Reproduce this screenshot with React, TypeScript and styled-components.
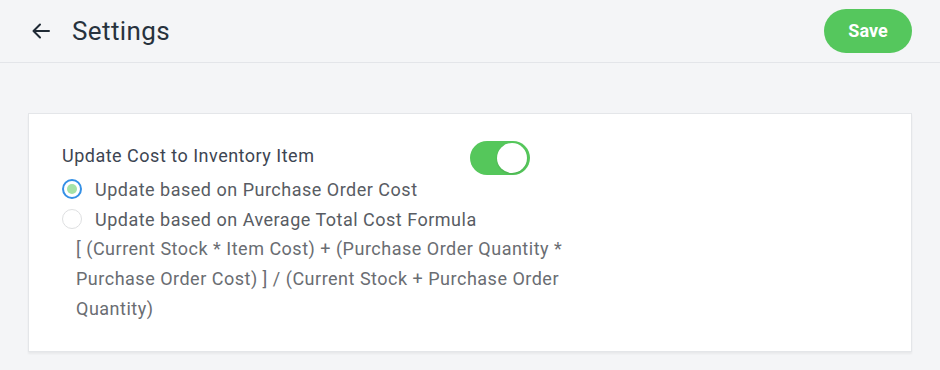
import React, { useState } from "react";
import styled, { createGlobalStyle } from "styled-components";

const GlobalStyle = createGlobalStyle`
  html, body { margin: 0; padding: 0; background: #f4f5f7; }
  body { font-family: Roboto, "Liberation Sans", Arial, sans-serif; }
  * { box-sizing: border-box; }
`;

const Page = styled.div`
  width: 940px;
  height: 370px;
  background: #f4f5f7;
  overflow: hidden;
`;

const Header = styled.header`
  height: 63px;
  display: flex;
  align-items: center;
  justify-content: space-between;
  padding: 0 28px 0 31px;
  border-bottom: 1px solid #e3e5e9;
`;

const TitleGroup = styled.div`
  display: flex;
  align-items: center;
  gap: 21px;
`;

const BackButton = styled.button`
  border: none;
  background: none;
  padding: 0;
  width: 20px;
  height: 20px;
  display: flex;
  align-items: center;
  justify-content: center;
  color: #1f2a35;
  cursor: pointer;
`;

const PageTitle = styled.h1`
  margin: 0;
  font-size: 26px;
  font-weight: 400;
  color: #27323d;
  letter-spacing: 0.4px;
`;

const SaveButton = styled.button`
  width: 88px;
  height: 44px;
  border: none;
  border-radius: 22px;
  background: #55c75d;
  color: #fff;
  font-family: Roboto, "Liberation Sans", Arial, sans-serif;
  font-size: 18px;
  font-weight: 700;
  cursor: pointer;
  margin-top: -1px;
`;

const Main = styled.main`
  padding: 50px 28px 0 28px;
`;

const Card = styled.section`
  height: 239px;
  background: #fff;
  border: 1px solid #e4e6e9;
  box-shadow: 0 2px 2px rgba(0, 0, 0, 0.05);
  padding: 27px 33px;
`;

const SettingHead = styled.div`
  display: flex;
  align-items: flex-start;
  height: 33px;
`;

const SettingTitle = styled.div`
  width: 408px;
  font-size: 18px;
  letter-spacing: 0.5px;
  line-height: 30px;
  color: #3d4552;
`;

const Toggle = styled.button<{ $on: boolean }>`
  position: relative;
  width: 60px;
  height: 34px;
  border-radius: 17px;
  border: none;
  padding: 0;
  background: ${(p) => (p.$on ? "#55c75b" : "#d6d9dd")};
  cursor: pointer;
`;

const Knob = styled.span<{ $on: boolean }>`
  position: absolute;
  top: 2px;
  left: ${(p) => (p.$on ? "27px" : "2px")};
  width: 30px;
  height: 30px;
  border-radius: 50%;
  background: #fff;
  box-shadow: 0 1px 2px rgba(0, 0, 0, 0.12);
`;

const RadioRow = styled.label`
  display: flex;
  align-items: center;
  gap: 13px;
  height: 30px;
  font-size: 18px;
  letter-spacing: 0.5px;
  color: #585c63;
  cursor: pointer;
`;

const RadioCircle = styled.span<{ $checked: boolean }>`
  width: 20px;
  height: 20px;
  border-radius: 50%;
  border: ${(p) => (p.$checked ? "2px solid #3490e6" : "1.5px solid #dedfe1")};
  display: flex;
  align-items: center;
  justify-content: center;
  flex-shrink: 0;
  &::after {
    content: "";
    display: ${(p) => (p.$checked ? "block" : "none")};
    width: 10px;
    height: 10px;
    border-radius: 50%;
    background: #a5e2a7;
  }
`;

const Formula = styled.p`
  margin: 0;
  padding-left: 14px;
  width: 530px;
  font-size: 18px;
  letter-spacing: 0.5px;
  line-height: 30px;
  color: #6a6d72;
`;

export default function App() {
  const [on, setOn] = useState(true);
  const [choice, setChoice] = useState(0);
  return (
    <Page>
      <GlobalStyle />
      <Header>
        <TitleGroup>
          <BackButton aria-label="Back">
            <svg width="20" height="20" viewBox="0 0 20 20" fill="none">
              <path
                d="M18 10H2.5M9 3.5L2.5 10L9 16.5"
                stroke="currentColor"
                strokeWidth="2"
                strokeLinecap="round"
                strokeLinejoin="round"
              />
            </svg>
          </BackButton>
          <PageTitle>Settings</PageTitle>
        </TitleGroup>
        <SaveButton>Save</SaveButton>
      </Header>
      <Main>
        <Card>
          <SettingHead>
            <SettingTitle>Update Cost to Inventory Item</SettingTitle>
            <Toggle $on={on} onClick={() => setOn(!on)} aria-label="toggle">
              <Knob $on={on} />
            </Toggle>
          </SettingHead>
          <RadioRow onClick={() => setChoice(0)}>
            <RadioCircle $checked={choice === 0} />
            Update based on Purchase Order Cost
          </RadioRow>
          <RadioRow onClick={() => setChoice(1)}>
            <RadioCircle $checked={choice === 1} />
            Update based on Average Total Cost Formula
          </RadioRow>
          <Formula>
            [ (Current Stock * Item Cost) + (Purchase Order Quantity *
            Purchase Order Cost) ] / (Current Stock + Purchase Order
            Quantity)
          </Formula>
        </Card>
      </Main>
    </Page>
  );
}
